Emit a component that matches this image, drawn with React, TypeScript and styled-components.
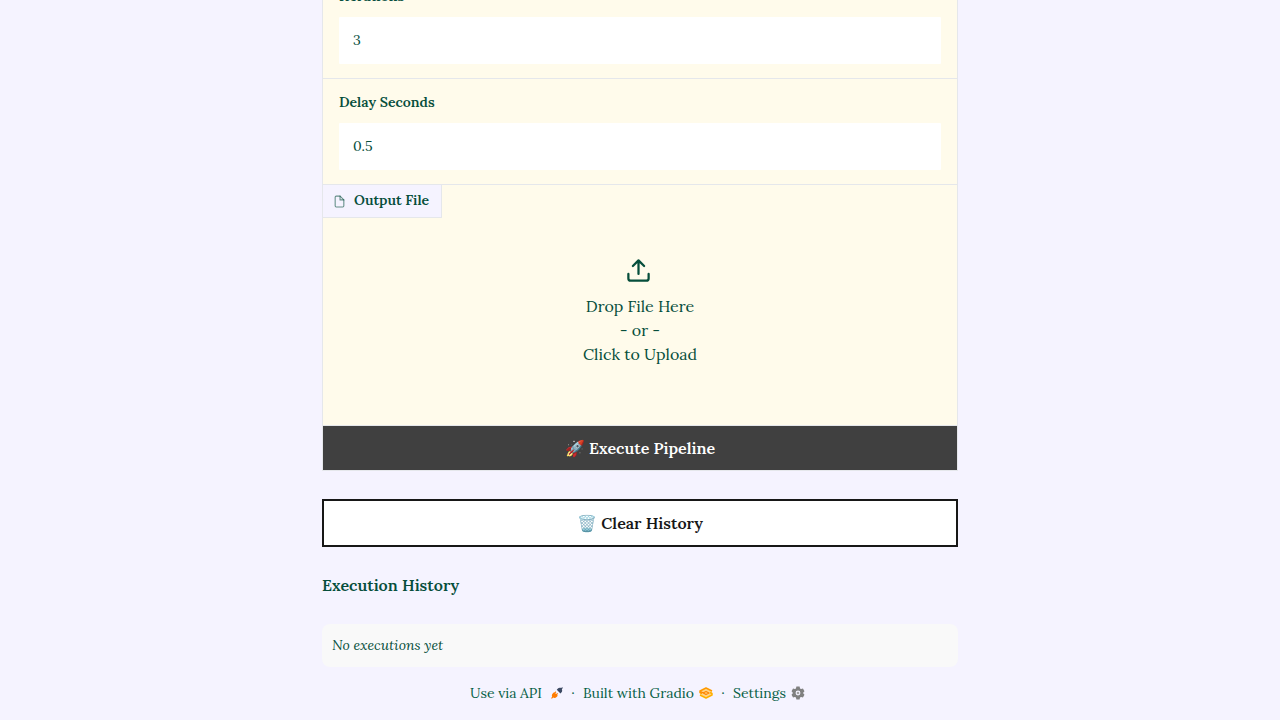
import React from "react";
import styled, { createGlobalStyle } from "styled-components";

const GlobalStyle = createGlobalStyle`
  *, *::before, *::after { box-sizing: border-box; }
  body {
    margin: 0;
    background: #f5f3ff;
    color: #064e3b;
    font-family: Lora, "Noto Serif", "Liberation Serif", serif;
    font-size: 16px;
    line-height: 24px;
  }
  button, input { font: inherit; color: inherit; }
`;

const Page = styled.div`
  display: flex;
  flex-direction: column;
  justify-content: flex-end;
  align-items: center;
  height: 100vh;
  overflow: hidden;
`;

const Column = styled.main`
  flex: none;
  display: flex;
  flex-direction: column;
  width: 100%;
  max-width: 636px;
`;

const Form = styled.form`
  display: flex;
  flex-direction: column;
  gap: 1px;
  margin: 0 0 28px;
  border: 1px solid #e5e7eb;
  background: #e5e7eb;
`;

const Field = styled.label`
  display: flex;
  flex-direction: column;
  gap: 11px;
  padding: 13px 16px 14px;
  background: #fffbeb;
`;

const FieldTitle = styled.span`
  font-size: 14px;
  font-weight: 600;
  line-height: 20px;
`;

const FieldInput = styled.input`
  width: 100%;
  height: 47px;
  padding: 0 14px 2px;
  border: 0;
  border-radius: 1px;
  outline: none;
  background: #fff;
  font-size: 14px;
  line-height: 20px;
`;

const FilePanel = styled.div`
  display: flex;
  flex-direction: column;
  align-items: flex-start;
  height: 240px;
  background: #fffbeb;
`;

const FileTab = styled.div`
  display: flex;
  align-items: flex-start;
  gap: 8px;
  height: 33px;
  padding: 5px 12px 5px 10px;
  border: solid #e5e7eb;
  border-width: 0 1px 1px 0;
  background: #f5f3ff;

  svg { margin-top: 5px; }
`;

const DropButton = styled.button`
  display: flex;
  flex: 1;
  flex-direction: column;
  align-items: center;
  align-self: stretch;
  justify-content: flex-start;
  padding: 39px 0 0;
  border: 0;
  background: none;
  cursor: pointer;
`;

const UploadGlyph = styled.svg`
  width: 27px;
  height: 27px;
  margin: 0 3px 10px 0;
`;

const ActionButton = styled.button<{ $outlined?: boolean }>`
  height: ${(p) => (p.$outlined ? 48 : 44)}px;
  padding: 0;
  border: ${(p) => (p.$outlined ? "2px solid #171717" : "0")};
  background: ${(p) => (p.$outlined ? "#fff" : "#404040")};
  color: ${(p) => (p.$outlined ? "#171717" : "#fff")};
  font-weight: 600;
  cursor: pointer;
`;

const HistoryTitle = styled.h3`
  margin: 26px 0;
  font-size: 16px;
  font-weight: 600;
  line-height: 25px;
`;

const HistoryBox = styled.div`
  padding: 11px 10px;
  border-radius: 8px;
  background: #f9f9f9;
  font-size: 14px;
  font-style: italic;
  line-height: 21px;
`;

const Footer = styled.footer`
  display: flex;
  flex: none;
  justify-content: center;
  padding: 16px 5px 17px 0;
  color: #065f46;
  font-size: 14px;
  line-height: 20px;
`;

const FooterLink = styled.a<{ $gap?: number }>`
  display: flex;
  align-items: center;
  gap: ${(p) => p.$gap ?? 5}px;
  color: inherit;
  text-decoration: none;
`;

const Dot = styled.span`
  width: 20px;
  text-align: center;
`;

const FileIcon = () => (
  <svg width="13" height="13" viewBox="0 0 24 24" fill="none" stroke="#064e3b" strokeOpacity="0.6" strokeWidth="2" strokeLinecap="round" strokeLinejoin="round" aria-hidden="true">
    <path d="M13 2H6a2 2 0 0 0-2 2v16a2 2 0 0 0 2 2h12a2 2 0 0 0 2-2V9z" />
    <path d="M13 2v7h7" />
  </svg>
);

const UploadIcon = () => (
  <UploadGlyph viewBox="0 0 24 24" fill="none" stroke="currentColor" strokeWidth="2" strokeLinecap="round" strokeLinejoin="round" aria-hidden="true">
    <path d="M21 15v4a2 2 0 0 1-2 2H5a2 2 0 0 1-2-2v-4" />
    <path d="M17 8l-5-5-5 5M12 3v12" />
  </UploadGlyph>
);

const ApiIcon = () => (
  <svg width="12" height="12" viewBox="0 0 28 28" aria-hidden="true">
    <path d="M27 1c-1-.8-2 .2-3.300 1.500-3-1.300-6-.7-8.200 1.500L13.500 6.500l8.500 8.500 2-2c2.300-2.300 2.700-5.300 1.300-8C26.700 3 28 2 27 1z" fill="#3c4963" />
    <path d="M7 12l-3 3c-2.300 2.300-2.500 5.300-1.200 8L.8 25.200c-.9.900.8 2.800 1.900 1.700L5 24.700c2.800 1.300 5.800.9 8-1.300l3-3-2-2 2.500-2.500-2-2L12 16.500 10 14.500 12.500 12l-2-2L8 13z" fill="#ff7c00" />
  </svg>
);

const GradioIcon = () => (
  <svg width="14" height="14" viewBox="0 0 28 28" fill="none" strokeLinejoin="round" aria-hidden="true">
    <path d="M14 4l12 6v8l-12 6-12-6v-8z" fill="#ffd58a" />
    <path d="M2 18l12 6 12-6v-3l-4-2" stroke="#ffb000" strokeWidth="3" />
    <path d="M26 10L14 4 2 10v3l4 2" stroke="#ff9a00" strokeWidth="3" />
    <path d="M3 11l11 6 6-3-6-3-6 3" stroke="#ff8500" strokeWidth="2.500" />
  </svg>
);

const SettingsIcon = () => (
  <svg width="14" height="14" viewBox="-1 -1 26 26" aria-hidden="true">
    <path fill="#808080" fillRule="evenodd" d="M9 0h6l.8 3.600 1.900 1.100 3.500-1.100 2.800 5-2.700 3.400 2.700 3.400-2.800 5-3.500-1.100-1.900 1.100L15 24H9l-.8-3.600-1.900-1.100-3.500 1.100-2.800-5L2.700 12 0 8.600l2.800-5 3.500 1.100 1.900-1.100zM12 7.500a4.500 4.500 0 1 0 0 9 4.500 4.500 0 0 0 0-9z" />
    <circle cx="12" cy="12" r="2.500" fill="#a3a3a3" />
  </svg>
);

export default function App() {
  return (
    <>
      <GlobalStyle />
      <Page>
        <Column>
          <Form onSubmit={(e) => e.preventDefault()}>
            <Field>
              <FieldTitle>Iterations</FieldTitle>
              <FieldInput inputMode="numeric" defaultValue="3" />
            </Field>
            <Field>
              <FieldTitle>Delay Seconds</FieldTitle>
              <FieldInput inputMode="decimal" defaultValue="0.5" />
            </Field>
            <FilePanel>
              <FileTab>
                <FileIcon />
                <FieldTitle>Output File</FieldTitle>
              </FileTab>
              <DropButton type="button">
                <UploadIcon />
                <span>Drop File Here</span>
                <span>- or -</span>
                <span>Click to Upload</span>
              </DropButton>
            </FilePanel>
            <ActionButton type="submit">🚀 Execute Pipeline</ActionButton>
          </Form>
          <ActionButton type="button" $outlined>🗑️ Clear History</ActionButton>
          <HistoryTitle>Execution History</HistoryTitle>
          <HistoryBox>No executions yet</HistoryBox>
        </Column>
        <Footer>
          <FooterLink href="#api" $gap={9}>Use via API <ApiIcon /></FooterLink>
          <Dot>·</Dot>
          <FooterLink href="#gradio">Built with Gradio <GradioIcon /></FooterLink>
          <Dot>·</Dot>
          <FooterLink href="#settings">Settings <SettingsIcon /></FooterLink>
        </Footer>
      </Page>
    </>
  );
}
